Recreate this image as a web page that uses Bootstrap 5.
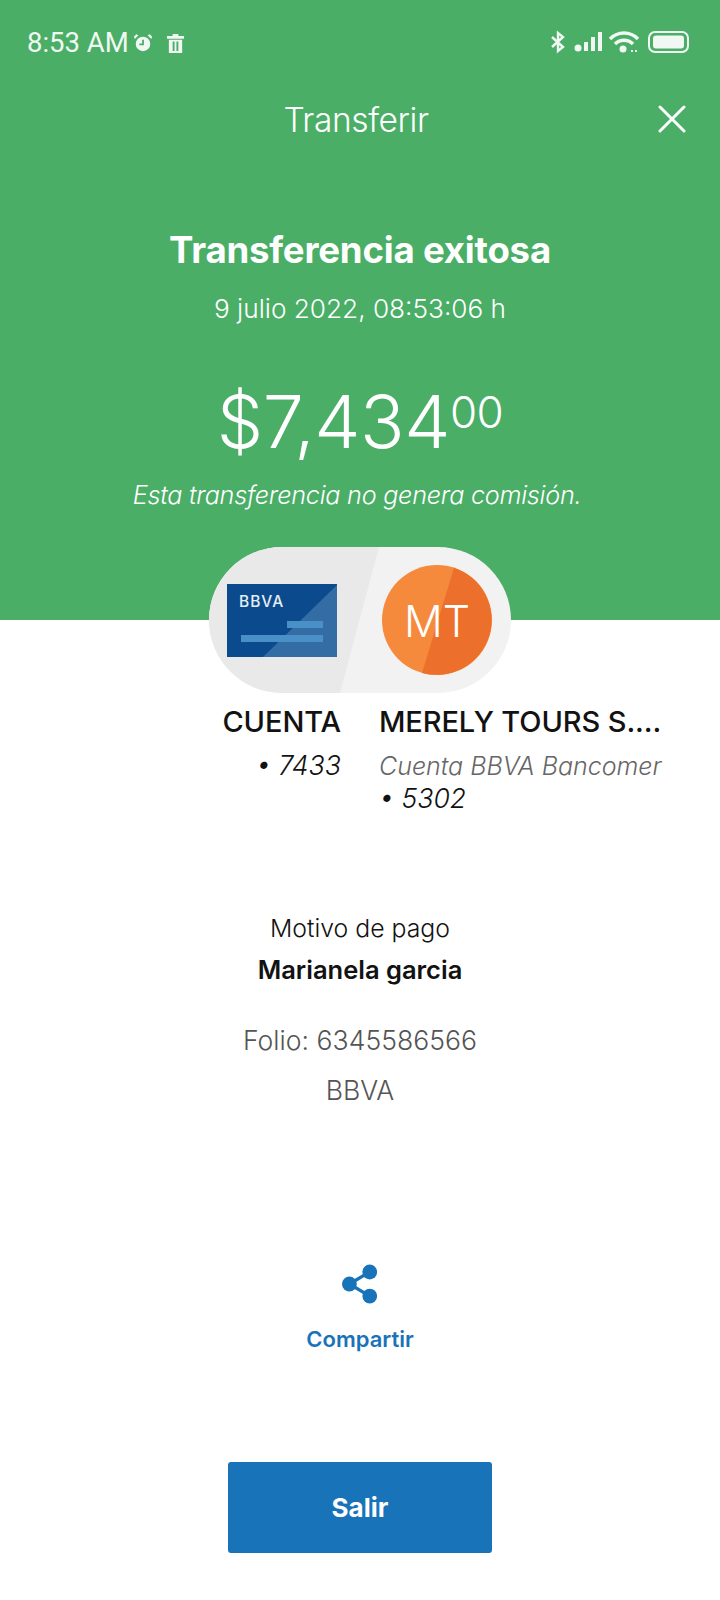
<!DOCTYPE html>
<html lang="es">
<head>
  <meta charset="UTF-8" />
  <meta name="viewport" content="width=device-width, initial-scale=1.0"/>
  <title>Transferir</title>
  <link href="https://cdn.jsdelivr.net/npm/bootstrap@5.3.0/dist/css/bootstrap.min.css" rel="stylesheet"/>
  <style>
    body { background-color: #fff; font-family: "Inter", "Liberation Sans", sans-serif; color: #121212; width: 720px; height: 1600px; overflow: hidden; }
    .green-head { background-color: #4aae66; height: 620px; color: #fff; }
    .status-row { height: 87px; padding: 26px 30px 0 27px; }
    .clock-text { font-family: "Roboto", sans-serif; font-size: 27.500px; line-height: 34px; color: #f1f8f3; }
    .trash-gap { margin-left: 13px; }
    .title-row { height: 66px; padding: 0 38px 0 30px; position: relative; }
    .title-text { font-size: 33.5px; font-weight: 300; line-height: 66px; letter-spacing: -.4px; }
    .close-icon { position: absolute; right: 34px; top: 18px; }
    .done-title { font-size: 36.6px; font-weight: 700; line-height: 44px; margin-top: 75px; letter-spacing: -.2px; }
    .done-date { font-size: 26.2px; font-weight: 300; line-height: 32px; margin-top: 21px; }
    .amount-text { font-size: 73.5px; font-weight: 300; line-height: 86px; margin-top: 54px; letter-spacing: -.5px; }
    .amount-text sup { font-size: 44px; top: -20px; line-height: 0; }
    .fee-note { font-size: 25.2px; font-weight: 300; font-style: italic; line-height: 32px; margin-top: 14px; margin-right: 6px; letter-spacing: -.25px; }
    .pill-box { width: 302px; height: 146px; margin: -73px 0 0 209px; border-radius: 73px; overflow: hidden; background-color: #f2f2f2; position: relative; }
    .acct-cols { margin-top: 10px; }
    .acct-left { width: 341px; text-align: right; }
    .acct-right { margin-left: 38px; }
    .acct-name { font-size: 29px; font-weight: 500; line-height: 38px; letter-spacing: -.1px; white-space: nowrap; }
    .acct-sub { font-size: 26.6px; font-weight: 300; font-style: italic; line-height: 32px; margin-top: 8px; }
    .acct-gray { color: #666; font-size: 25px; }
    .detail-wrap { margin-top: 98px; }
    .reason-label { font-size: 24.8px; font-weight: 300; line-height: 32px; }
    .reason-val { font-size: 25.5px; font-weight: 600; line-height: 32px; margin-top: 10px; }
    .folio-text { font-size: 26.6px; font-weight: 300; line-height: 32px; color: #555; }
    .folio-gap { margin-top: 38px; }
    .bank-gap { margin-top: 18px; }
    .share-wrap { margin-top: 158px; color: #1973b8; }
    .share-label { font-size: 22px; font-weight: 600; line-height: 30px; margin-top: 20px; }
    .exit-btn { width: 264px; height: 91px; border-radius: 3px; background-color: #1973b8; border: 0; color: #fff; font-size: 26px; font-weight: 700; margin-top: 108px; }
  </style>
</head>
<body>

  <div class="green-head text-center">
    <div class="status-row d-flex justify-content-between align-items-start">
      <div class="d-flex align-items-center">
        <span class="clock-text">8:53 AM</span>
        <svg class="ms-1" width="20" height="20" viewBox="0 0 22 22" fill="#f1f8f3">
          <circle cx="11" cy="12" r="8"/>
          <path d="M2 6.500 6 2.500 3.500 1.500 1 4zM20 6.500 16 2.500 18.500 1.500 21 4z"/>
          <path d="M11 7.500v5H7" stroke="#4aae66" stroke-width="2" fill="none"/>
        </svg>
        <svg class="trash-gap" width="19" height="21" viewBox="0 0 20 22" fill="#f1f8f3">
          <path d="M1 3h6V1h6v2h6v3H1zM3 7h14v14H3z"/>
          <path d="M8 9v10M12 9v10" stroke="#4aae66" stroke-width="2"/>
        </svg>
      </div>
      <div class="d-flex align-items-center gap-1 mt-1">
        <svg width="16" height="24" viewBox="0 0 16 24" fill="none" stroke="#f1f8f3" stroke-width="2.400">
          <path d="M2 7 13 17 8 21V3l5 4L2 17"/>
        </svg>
        <svg class="ms-1" width="30" height="22" viewBox="0 0 30 22" fill="#f1f8f3">
          <circle cx="4" cy="17" r="3.500"/>
          <rect x="10" y="11" width="4" height="9"/>
          <rect x="17" y="6" width="4" height="14"/>
          <rect x="24" y="1" width="4" height="19"/>
        </svg>
        <svg class="me-1" width="32" height="24" viewBox="0 0 32 24" fill="none" stroke="#f1f8f3" stroke-width="3.500">
          <path d="M2 9C10 1 22 1 30 9"/>
          <path d="M7 14C12 9 20 9 25 14"/>
          <circle cx="15" cy="19" r="3.500" fill="#f1f8f3" stroke="none"/>
          <path d="M23 21h2M27 21h2" stroke-width="2"/>
        </svg>
        <svg width="42" height="24" viewBox="0 0 42 24">
          <rect x="1" y="2" width="39" height="20" rx="6" fill="none" stroke="#f1f8f3" stroke-width="2"/>
          <rect x="5" y="5.500" width="31" height="13" rx="3" fill="#f1f8f3"/>
        </svg>
      </div>
    </div>
    <div class="title-row">
      <div class="title-text">Transferir</div>
      <svg class="close-icon" width="28" height="28" viewBox="0 0 28 28" stroke="#fff" stroke-width="3" stroke-linecap="round">
        <path d="M2 2 26 26M26 2 2 26"/>
      </svg>
    </div>
    <div class="done-title">Transferencia exitosa</div>
    <div class="done-date">9 julio 2022, 08:53:06 h</div>
    <div class="amount-text">$7,434<sup>00</sup></div>
    <div class="fee-note">Esta transferencia no genera comisión.</div>
  </div>

  <div class="pill-box">
    <svg class="d-block" width="302" height="146" viewBox="0 0 302 146">
      <path d="M0 0H170L131 146H0z" fill="#e9e9e9"/>
      <rect x="18" y="37" width="110" height="73" fill="#0b4a8d"/>
      <path d="M128 38V110H54z" fill="#346da3"/>
      <rect x="78" y="74" width="36" height="7" fill="#4a90c8"/>
      <rect x="32" y="88" width="82" height="7" fill="#4a90c8"/>
      <circle cx="228" cy="73" r="55" fill="#f68a3c"/>
      <path d="M245 20.700A55 55 0 0 1 213 125.900z" fill="#ec702b"/>
      <text x="30" y="60" font-family="Inter, sans-serif" font-size="15.500" font-weight="500" letter-spacing="1" fill="#e6eef5">BBVA</text>
      <text x="228" y="90" font-family="Inter, sans-serif" font-size="43" font-weight="300" fill="#fff" text-anchor="middle">MT</text>
    </svg>
  </div>

  <div class="acct-cols d-flex">
    <div class="acct-left">
      <div class="acct-name">CUENTA</div>
      <div class="acct-sub">• 7433</div>
    </div>
    <div class="acct-right">
      <div class="acct-name">MERELY TOURS S....</div>
      <div class="acct-sub"><span class="acct-gray">Cuenta BBVA Bancomer</span><br>• 5302</div>
    </div>
  </div>

  <div class="detail-wrap text-center">
    <div class="reason-label">Motivo de pago</div>
    <div class="reason-val">Marianela garcia</div>
    <div class="folio-text folio-gap">Folio: 6345586566</div>
    <div class="folio-text bank-gap">BBVA</div>
  </div>

  <div class="share-wrap text-center">
    <svg class="d-block mx-auto" width="37" height="40" viewBox="0 0 40 42" fill="#1973b8">
      <circle cx="8" cy="21" r="8"/>
      <circle cx="30" cy="8" r="8"/>
      <circle cx="30" cy="34" r="8"/>
      <path d="M8 21 30 8M8 21 30 34" stroke="#1973b8" stroke-width="3.500"/>
    </svg>
    <div class="share-label">Compartir</div>
  </div>

  <div class="text-center">
    <button class="btn exit-btn" type="button">Salir</button>
  </div>

</body>
</html>
